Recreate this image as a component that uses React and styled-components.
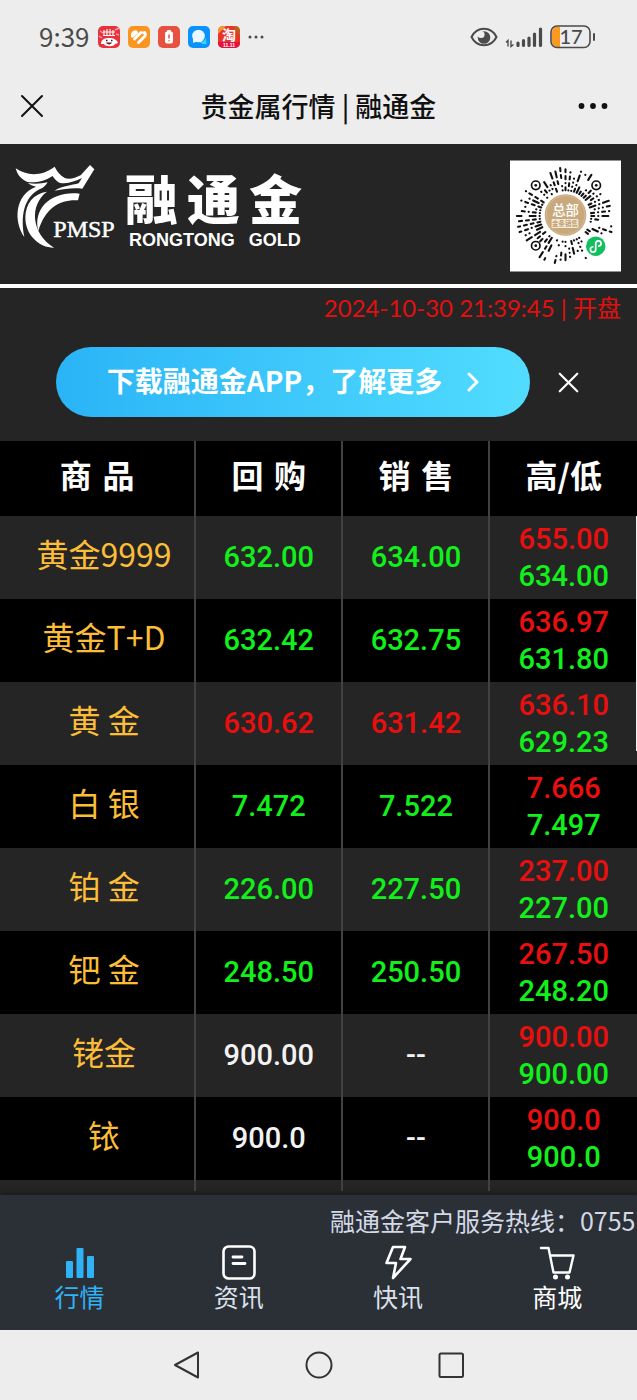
import React from 'react';
import styled, { createGlobalStyle } from 'styled-components';

const GlobalStyle = createGlobalStyle`
  * {
    box-sizing: border-box;
  }

  body {
    margin: 0;
    background: #252525;
    color: #fff;
    font-family: 'Noto Sans CJK SC', 'Noto Sans', sans-serif;
  }

  button {
    padding: 0;
    border: 0;
    background: none;
    color: inherit;
    font: inherit;
    cursor: pointer;
  }

  a {
    color: inherit;
    text-decoration: none;
  }

  svg {
    display: block;
    flex: none;
  }
`;

const Page = styled.div`
  display: flex;
  flex-direction: column;
  min-height: 100vh;
  overflow: hidden;
`;

const StatusBar = styled.div`
  display: flex;
  align-items: center;
  justify-content: space-between;
  height: 74px;
  padding: 0 41px 0 39px;
  background: #ededed;
  color: #4a4a4a;
`;

const StatusGroup = styled.div`
  display: flex;
  align-items: center;
  gap: ${({ $gap }) => $gap}px;
`;

const Clock = styled.span`
  padding-bottom: 2px;
  font-size: 26px;
  line-height: 32px;
`;

const TitleBar = styled.header`
  display: grid;
  grid-template-columns: 64px 1fr 64px;
  align-items: center;
  height: 70px;
  padding-bottom: 6px;
  background: #ededed;
  color: #111;
`;

const TitleButton = styled.button`
  display: flex;
  justify-content: ${({ $end }) => ($end ? 'flex-end' : 'flex-start')};
  padding: ${({ $end }) => ($end ? '0 29px 0 0' : '0 0 0 20px')};
`;

const Title = styled.h1`
  margin: 0;
  font-size: 27px;
  font-weight: 500;
  line-height: 36px;
  text-align: center;
`;

const BrandBar = styled.section`
  display: flex;
  align-items: flex-end;
  justify-content: space-between;
  min-height: 144px;
  padding: 14px 16px 12px 10px;
  border-bottom: 4px solid #fff;
`;

const Brand = styled.div`
  display: flex;
  align-self: flex-start;
  gap: 3px;
`;

const BrandText = styled.div`
  display: flex;
  flex-direction: column;
  padding-top: 17px;
`;

const BrandName = styled.div`
  display: flex;
  gap: 9px;
  font-family: 'Liberation Sans', 'Noto Sans CJK SC', sans-serif;
  font-size: 53px;
  font-weight: 900;
  line-height: 54px;
`;

const BrandLatin = styled.div`
  display: flex;
  gap: 14px;
  padding-left: 4px;
  font-family: 'Liberation Sans', sans-serif;
  font-size: 18px;
  font-weight: 700;
  line-height: 22px;
`;

const TradeTime = styled.p`
  margin: 0;
  padding: 2px 16px 4px;
  color: #e11010;
  font-family: Lato, 'Noto Sans CJK SC', sans-serif;
  font-size: 24px;
  line-height: 36px;
  text-align: right;
`;

const Banner = styled.div`
  display: flex;
  align-items: center;
  gap: 28px;
  padding: 17px 58px 24px 56px;
`;

const BannerLink = styled.a`
  display: flex;
  flex: 1;
  align-items: center;
  justify-content: center;
  gap: 25px;
  height: 70px;
  border-radius: 35px;
  background: linear-gradient(90deg, #2ab4f7, #51dcff);
  font-size: 28px;
  font-weight: 700;
  white-space: nowrap;
`;

const BannerText = styled.span`
  padding-bottom: 4px;
`;

const TableWrap = styled.div`
  position: relative;
  flex: 1;
`;

const ScrollThumb = styled.div`
  position: absolute;
  top: 75px;
  right: 0;
  width: 1px;
  height: 235px;
  background: #f2f2f2;
`;

const PriceTable = styled.table`
  width: 100%;
  table-layout: fixed;
  border-collapse: separate;
  border-spacing: 0;
`;

const Row = styled.tr`
  height: 83px;
  background: ${({ $dark }) => ($dark ? '#000' : '#252525')};
`;

const HeadRow = styled(Row)`
  height: 75px;
`;

const HeadCell = styled.th`
  width: ${({ $width }) => $width};
  padding: 0 0 9px;
  border-right: 2px solid #414141;
  font-size: 32px;
  font-weight: 700;
  line-height: 40px;

  &:last-child {
    border-right: 0;
  }
`;

const NameCell = styled.th`
  padding: 0 0 9px 14px;
  border-right: 2px solid #414141;
  color: #fcbd38;
  font-size: 32px;
  font-weight: 400;
  line-height: 40px;
`;

const colors = { up: '#e90f0f', down: '#12f01b', flat: '#f2f2f2' };

const PriceCell = styled.td`
  padding: 0;
  border-right: 2px solid #414141;
  color: ${({ $tone }) => colors[$tone]};
  font-family: Roboto, sans-serif;
  font-size: 29px;
  font-weight: 500;
  line-height: 37px;
  text-align: center;

  &:last-child {
    border-right: 0;
  }
`;

const Price = styled.div`
  color: ${({ $tone }) => colors[$tone]};
`;

const TailCell = styled.td`
  height: 11px;
  padding: 0;
  border-right: 2px solid #414141;

  &:last-child {
    border-right: 0;
  }
`;

const BottomBar = styled.footer`
  background: #2b2f36;
  box-shadow: 0 -1px 6px rgba(0, 0, 0, 0.4);
`;

const Hotline = styled.p`
  margin: 0;
  padding: 7px 0 1px 51.8%;
  overflow: hidden;
  color: #d3dae6;
  font-size: 25px;
  line-height: 36px;
  white-space: nowrap;
`;

const Tabs = styled.nav`
  display: grid;
  grid-template-columns: repeat(4, 1fr);
  padding: 5px 0 18px;
`;

const Tab = styled.a`
  display: flex;
  flex-direction: column;
  align-items: center;
  color: ${({ $color }) => $color};
  font-size: 25px;
  line-height: 32px;
`;

const SystemBar = styled.div`
  display: flex;
  align-items: center;
  justify-content: center;
  gap: 104px;
  height: 70px;
  background: #ededed;
`;

const rows = [
  { name: '黄金9999', buy: '632.00', sell: '634.00', high: '655.00', low: '634.00', tone: 'down' },
  { name: '黄金T+D', buy: '632.42', sell: '632.75', high: '636.97', low: '631.80', tone: 'down' },
  { name: '黄 金', buy: '630.62', sell: '631.42', high: '636.10', low: '629.23', tone: 'up' },
  { name: '白 银', buy: '7.472', sell: '7.522', high: '7.666', low: '7.497', tone: 'down' },
  { name: '铂 金', buy: '226.00', sell: '227.50', high: '237.00', low: '227.00', tone: 'down' },
  { name: '钯 金', buy: '248.50', sell: '250.50', high: '267.50', low: '248.20', tone: 'down' },
  { name: '铑金', buy: '900.00', sell: '--', high: '900.00', low: '900.00', tone: 'flat' },
  { name: '铱', buy: '900.0', sell: '--', high: '900.0', low: '900.0', tone: 'flat' },
];

const CloseIcon = ({ size, width }) => (
  <svg width={size} height={size} viewBox="0 0 24 24" fill="none" stroke="currentColor" strokeWidth={width} strokeLinecap="round">
    <path d="M2 2 22 22M22 2 2 22" />
  </svg>
);

const AppIcons = () => (
  <>
    <svg width="22" height="22" viewBox="0 0 22 22">
      <rect width="22" height="22" rx="5" fill="#e8323c" />
      <path d="M1 10 4 12M17 4l4-2M18 8l3 1M2 5l3 2" stroke="#ff9aa6" strokeWidth="1.5" />
      <path d="M6 4v5M9 3v6M12 3v6M15 4v5M5 6h12M5 9.5h12" stroke="#fff" strokeWidth="1.1" />
      <path d="M3 18c0-4 3-6 8-6s8 2 9 5l-3 1c-1 3-10 3-11 0z" fill="#fff" />
      <path d="M8 14.5h1.5M13 14.5h1.5" stroke="#222" strokeWidth="1.5" />
      <path d="M8 16.5c1 2.500 5 2.500 6 0z" fill="#7d1720" />
    </svg>
    <svg width="22" height="22" viewBox="0 0 22 22">
      <rect width="22" height="22" rx="5" fill="#fb9520" />
      <g fill="none" stroke="#fff" strokeWidth="3" strokeLinecap="round" strokeLinejoin="round">
        <path d="M4.5 10 8.500 6.500C7.500 5 4 6 4.500 10Z" fill="#fff" />
        <path d="M6.500 13 13 6.500" />
        <path d="M10.500 16.500 17 10C18.200 7.500 16.500 6.200 15.500 6.800" />
      </g>
    </svg>
    <svg width="22" height="22" viewBox="0 0 22 22">
      <rect width="22" height="22" rx="5" fill="#e8503f" />
      <rect x="9" y="4" width="4" height="3" rx="1" fill="#fff" />
      <rect x="7" y="5.5" width="8" height="12" rx="2" fill="#fff" />
      <path d="M11 8.500v4M11 14.300v1" stroke="#e8503f" strokeWidth="1.5" />
    </svg>
    <svg width="22" height="22" viewBox="0 0 22 22">
      <rect width="22" height="22" rx="5" fill="#0c92fd" />
      <path d="M12 16c3 0 5.500-2 6-4.500l.5 6.500c-2 .5-5 0-6.500-2z" fill="#38d3f5" />
      <circle cx="10.5" cy="10" r="6.3" fill="#eaf7ff" />
      <path d="M5 12v5l5-2z" fill="#eaf7ff" />
    </svg>
    <svg width="22" height="22" viewBox="0 0 22 22" fontFamily="Liberation Sans, Noto Sans CJK SC, sans-serif" fontWeight="700">
      <rect width="22" height="22" rx="5" fill="#ea3328" />
      <path d="M0 8V5a5 5 0 0 1 5-5h3z" fill="#f39a2a" />
      <path d="M15 0h2a5 5 0 0 1 5 5v5z" fill="#b8631c" />
      <path d="M0 16h22v1a5 5 0 0 1-5 5H5a5 5 0 0 1-5-5z" fill="#e3123f" />
      <text x="11" y="13.5" textAnchor="middle" fill="#fff" fontSize="14">淘</text>
      <text x="11" y="21" textAnchor="middle" fill="#fff" fontSize="5">11.11</text>
    </svg>
    <svg width="16" height="4" viewBox="0 0 16 4" fill="#4a4a4a">
      <circle cx="2" cy="2" r="1.5" />
      <circle cx="8" cy="2" r="1.5" />
      <circle cx="14" cy="2" r="1.5" />
    </svg>
  </>
);

const StatusIcons = () => (
  <>
    <svg width="28" height="20" viewBox="0 0 28 20">
      <circle cx="14" cy="10.5" r="6.3" fill="#4a4a4a" />
      <circle cx="11" cy="7.5" r="3.6" fill="#ededed" />
      <path d="M1.5 10C4 5 8.500 1.800 14 1.800s10 3.200 12.500 8.200c-2.500 5-7 8.200-12.500 8.200S4 15 1.500 10Z" fill="none" stroke="#4a4a4a" strokeWidth="2" />
    </svg>
    <svg width="38" height="22" viewBox="0 0 38 22" stroke="#4a4a4a" fill="none">
      <path d="M1 16.500 3 14.500v6M6 14.500v6l2.500-2" strokeWidth="1.4" />
      <path d="M13 17v2.500M18.500 14.500v5M24 12v7.500M29.500 8v11.500M35.500 3v16.500" strokeWidth="3.2" strokeLinecap="round" />
    </svg>
    <svg width="46" height="24" viewBox="0 0 46 24">
      <path d="M10 2v20H7a5 5 0 0 1-5-5V7a5 5 0 0 1 5-5z" fill="#fb9a20" />
      <rect x="1" y="1" width="39" height="21.5" rx="6" fill="none" stroke="#4a4a4a" strokeWidth="1.6" />
      <path d="M44 9v6" stroke="#4a4a4a" strokeWidth="2" strokeLinecap="round" />
      <text x="21" y="19" textAnchor="middle" fill="#4a4a4a" fontSize="20" fontFamily="Lato" fontWeight="500">17</text>
    </svg>
  </>
);

const DragonLogo = () => (
  <svg width="112" height="94" viewBox="0 0 336 282" fill="#fff">
    <path d="M17 31C50 54 95 56 134 26C140 38 148 50 164 60C178 66 196 60 212 52L240 21L253 34L217 92C190 89 165 92 134 98C155 84 186 82 206 76L216 60C195 70 170 80 148 74C138 69 132 60 128 54C100 72 75 75 52 72C33 64 22 50 17 31Z" />
    <path d="M54 75C74 79 94 77 113 73C108 80 104 86 97 90C50 108 28 160 43 237C10 190 14 110 78 86C68 84 60 81 54 75Z" />
    <path d="M111 101C58 140 62 225 132 269C90 270 45 232 46 177C47 136 70 107 111 101Z" />
    <path d="M209 107L204 127C148 124 106 150 85 219C68 150 125 98 209 107Z" />
    <text x="130" y="236" fontFamily="Liberation Serif" fontSize="72" stroke="#fff" strokeWidth="1.5">PMSP</text>
  </svg>
);

// Spokes of the round mini-program code, skipping the finder rings and the badge
const spokes = [];
const blocked = [[25, 25, 8], [86, 25, 8], [25, 86, 8], [86, 86, 13]];
let seed = 11;
for (let i = 0; i < 56; i += 1) {
  const a = (i / 56) * Math.PI * 2;
  let r = 26;
  while (r < 48) {
    seed = (seed * 1103515245 + 12345) % 2147483648;
    const n = seed / 2147483648;
    const len = n < 0.45 ? 0.2 : n < 0.8 ? 3 : 6;
    const end = Math.min(r + len, 49);
    const mx = 56 + Math.cos(a) * ((r + end) / 2);
    const my = 56 + Math.sin(a) * ((r + end) / 2);
    const free = blocked.every(([x, y, d]) => Math.hypot(mx - x, my - y) > d);
    if (free && (n * 10) % 1 > 0.2) {
      spokes.push([r, end].map((d) => `${(56 + Math.cos(a) * d).toFixed(1)} ${(56 + Math.sin(a) * d).toFixed(1)}`).join('L'));
    }
    r = end + 4;
  }
}

const QrCode = () => (
  <svg width="111" height="112" viewBox="0 0 112 112" role="img" aria-label="总部 金条销售" fontFamily="Liberation Sans, Noto Sans CJK SC, sans-serif">
    <rect width="112" height="112" fill="#fff" />
    <path d={`M${spokes.join('M')}`} stroke="#111" strokeWidth="2.1" strokeLinecap="round" fill="none" />
    {blocked.slice(0, 3).map(([x, y]) => (
      <g key={`${x}-${y}`}>
        <circle cx={x + 1} cy={y} r="4.3" fill="#fff" stroke="#111" strokeWidth="1.7" />
        <circle cx={x + 1} cy={y} r="1.4" fill="#111" />
      </g>
    ))}
    <circle cx="56" cy="55" r="21" fill="#c9a97c" />
    <circle cx="56" cy="55" r="19.5" fill="none" stroke="#dcc6a4" strokeWidth="0.6" />
    <text x="56" y="55" textAnchor="middle" fill="#fff" fontSize="13.5" fontWeight="500">总部</text>
    <rect x="42" y="59" width="27" height="9" rx="1" fill="#f4eadb" />
    <text x="55.5" y="66" textAnchor="middle" fill="#c0a070" fontSize="6.5" fontWeight="700">金条销售</text>
    <circle cx="86.5" cy="86.5" r="9.8" fill="#12bf5f" />
    <path d="M83.5 87a2.700 2.700 0 1 0 3 2.700v-6a2.700 2.700 0 1 1 3 2.700" fill="none" stroke="#fff" strokeWidth="1.7" strokeLinecap="round" />
  </svg>
);

const tabs = [
  {
    label: '行情',
    color: '#2fb2f6',
    icon: (
      <svg width="34" height="36" viewBox="0 0 34 36" fill="currentColor">
        <rect x="3" y="17" width="7" height="17" rx="1" />
        <rect x="13.5" y="4" width="7" height="30" rx="1" />
        <rect x="24" y="12" width="7" height="22" rx="1" />
      </svg>
    ),
  },
  {
    label: '资讯',
    color: '#dbe1ea',
    icon: (
      <svg width="34" height="36" viewBox="0 0 34 36" fill="none" stroke="#fff" strokeLinecap="round">
        <rect x="1.5" y="2.5" width="31" height="32" rx="5" strokeWidth="2.6" />
        <path d="M11 13h9M11 19.500h12" strokeWidth="2.8" />
      </svg>
    ),
  },
  {
    label: '快讯',
    color: '#dbe1ea',
    icon: (
      <svg width="34" height="36" viewBox="0 0 34 36" fill="none" stroke="#fff" strokeWidth="2.6" strokeLinejoin="round">
        <path d="M12 3H24L19.500 15H29.500L12 34L15 19H5.500Z" />
      </svg>
    ),
  },
  {
    label: '商城',
    color: '#fff',
    icon: (
      <svg width="36" height="36" viewBox="0 0 36 36" fill="none" stroke="#fff" strokeWidth="2.4" strokeLinecap="round" strokeLinejoin="round">
        <path d="M2 4H9.500L14.500 28.500H30.500L34.500 11.500H11.500" />
        <circle cx="16.5" cy="33" r="1.3" fill="#fff" />
        <circle cx="28.5" cy="33" r="1.3" fill="#fff" />
      </svg>
    ),
  },
];

const App = () => (
  <>
    <GlobalStyle />
    <Page>
      <StatusBar>
        <StatusGroup $gap={8}>
          <Clock>9:39</Clock>
          <AppIcons />
        </StatusGroup>
        <StatusGroup $gap={7}>
          <StatusIcons />
        </StatusGroup>
      </StatusBar>
      <TitleBar>
        <TitleButton aria-label="关闭">
          <CloseIcon size={24} width={2} />
        </TitleButton>
        <Title>贵金属行情 | 融通金</Title>
        <TitleButton $end aria-label="更多">
          <svg width="30" height="6" viewBox="0 0 30 6" fill="#111">
            <circle cx="3.5" cy="3" r="2.9" />
            <circle cx="15" cy="3" r="2.9" />
            <circle cx="26.5" cy="3" r="2.9" />
          </svg>
        </TitleButton>
      </TitleBar>

      <BrandBar>
        <Brand>
          <DragonLogo />
          <BrandText>
            <BrandName>
              <span>融</span>
              <span>通</span>
              <span>金</span>
            </BrandName>
            <BrandLatin>
              <span>RONGTONG</span>
              <span>GOLD</span>
            </BrandLatin>
          </BrandText>
        </Brand>
        <QrCode />
      </BrandBar>

      <TradeTime>2024-10-30 21:39:45 | 开盘</TradeTime>

      <Banner>
        <BannerLink href="#app">
          <BannerText>下载融通金APP，了解更多</BannerText>
          <svg width="12" height="20" viewBox="0 0 12 20" fill="none" stroke="#fff" strokeWidth="3" strokeLinecap="round" strokeLinejoin="round">
            <path d="M2 2l8 8-8 8" />
          </svg>
        </BannerLink>
        <button aria-label="关闭横幅">
          <CloseIcon size={21} width={2.5} />
        </button>
      </Banner>

      <TableWrap>
        <PriceTable>
          <thead>
            <HeadRow $dark>
              <HeadCell $width="30.8%">{'商\u2004品'}</HeadCell>
              <HeadCell $width="23.1%">{'回\u2004购'}</HeadCell>
              <HeadCell $width="23.1%">{'销\u2004售'}</HeadCell>
              <HeadCell $width="23%">高/低</HeadCell>
            </HeadRow>
          </thead>
          <tbody>
            {rows.map((row, i) => (
              <Row key={row.name} $dark={i % 2 === 1}>
                <NameCell scope="row">{row.name}</NameCell>
                <PriceCell $tone={row.tone}>{row.buy}</PriceCell>
                <PriceCell $tone={row.tone}>{row.sell}</PriceCell>
                <PriceCell>
                  <Price $tone="up">{row.high}</Price>
                  <Price $tone="down">{row.low}</Price>
                </PriceCell>
              </Row>
            ))}
            <tr>
              <TailCell />
              <TailCell />
              <TailCell />
              <TailCell />
            </tr>
          </tbody>
        </PriceTable>
        <ScrollThumb />
      </TableWrap>

      <BottomBar>
        <Hotline>融通金客户服务热线：0755</Hotline>
        <Tabs>
          {tabs.map((tab) => (
            <Tab key={tab.label} href={`#${tab.label}`} $color={tab.color}>
              {tab.icon}
              {tab.label}
            </Tab>
          ))}
        </Tabs>
      </BottomBar>

      <SystemBar>
        <button aria-label="返回">
          <svg width="28" height="28" viewBox="0 0 28 28" fill="none" stroke="#333" strokeWidth="2" strokeLinejoin="round">
            <path d="M25 1.500V26.500L2 14Z" />
          </svg>
        </button>
        <button aria-label="主页">
          <svg width="28" height="28" viewBox="0 0 28 28" fill="none" stroke="#333" strokeWidth="2">
            <circle cx="14" cy="14" r="12.5" />
          </svg>
        </button>
        <button aria-label="最近任务">
          <svg width="28" height="28" viewBox="0 0 28 28" fill="none" stroke="#333" strokeWidth="2">
            <rect x="2.5" y="2.5" width="23.5" height="23.5" rx="1.5" />
          </svg>
        </button>
      </SystemBar>
    </Page>
  </>
);

export default App;
